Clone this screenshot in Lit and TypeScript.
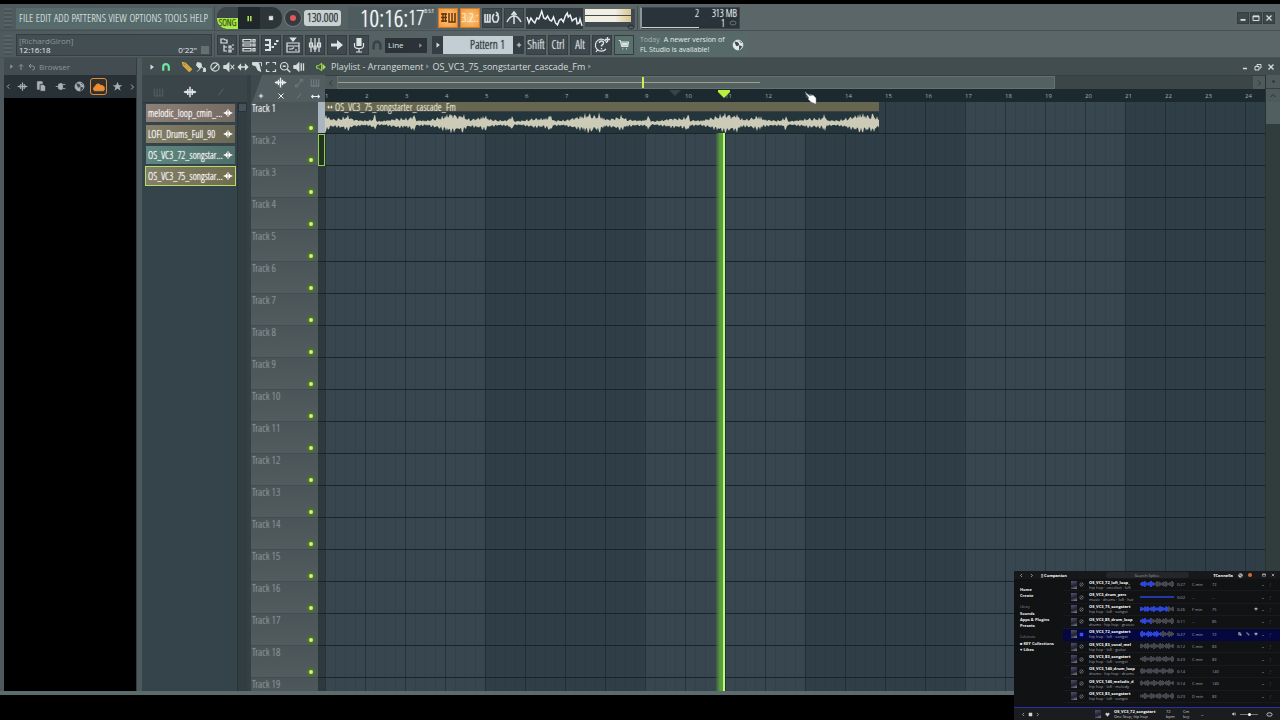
import { LitElement, html, svg, css } from "lit";
import { customElement, property, state } from "lit/decorators.js";
import { classMap } from "lit/directives/class-map.js";

const ICONS: Record<string, unknown> = {
  wave: svg`<path d="M1 8h14M3.5 6.5v3M5.5 4.5v7M8 2v12M10.5 4.5v7M12.5 6.5v3" stroke-width="1.7"/>`,
  tree: svg`<path d="M2 6V2h3l1 1h2v3zM5 8v6h3M5 10h3M10 9h2v2h-2zM10 13h2v2h-2zM13 8h2M13 12h2"/>`,
  rows: svg`<path d="M2 2.500h8v2.500H2zM2 7h8v2H2zM2 11.500h8V14H2zM12 2.500h2V5h-2zM12 7h2v2h-2zM12 11.500h2V14h-2z"/>`,
  roll: svg`<path d="M2 3h5v10H2M2 8h5M8.500 10h2.500M11 7h2.500M13 4h2.500" stroke-width="2"/>`,
  event: svg`<path d="M2 6h12v9H2zM2 9h12M4 12h3l2-1.500M10 13h2"/><path d="M5.500 1h5L8 4z" fill="currentColor"/>`,
  mixer: svg`<path d="M4 1v14M8 1v14M12 1v14"/><path d="M2.500 6h3v4h-3zM10.500 6h3v4h-3zM7 9h2v3H7z"/>`,
  arrow: svg`<path d="M2 6.500h6V3l6 5-6 5V9.500H2z" fill="currentColor" stroke="none"/>`,
  mic: svg`<path d="M6 1.500h4v7H6z" fill="currentColor"/><path d="M3.500 6v3q0 2.500 4.500 2.500T12.500 9V6M8 11.500V15M5 15h6"/>`,
  magnet: svg`<path d="M3.500 14V8a4.500 4.500 0 0 1 9 0v6" stroke-width="3.500"/>`,
  pencil: svg`<path d="M2 2l4 1 8 8-3 3-8-8zM5 5l7 7" fill="currentColor" fill-opacity=".45" stroke-width="1.500"/>`,
  brush: svg`<path d="M3 2l5 1 1 5-3 2-4-4zM9 8l5 5M7 10l-4 4M12 9l2 1v4h-3z" fill="currentColor"/>`,
  ban: svg`<circle cx="8" cy="8" r="5.500" stroke-width="1.600"/><path d="M12 4l-8 8" stroke-width="1.600"/>`,
  mute: svg`<path d="M1 6h3l4-4v12l-4-4H1z" fill="currentColor"/><path d="M10 5l5 6M15 5l-5 6" stroke-width="1.500"/>`,
  slip: svg`<path d="M0.500 8l5-5v4h5V3l5 5-5 5V9h-5v4z" fill="currentColor" stroke="none"/>`,
  slice: svg`<path d="M2 2h8l3 12-4-2-2-5-5-2z" fill="currentColor"/><path d="M11 2h3v5"/>`,
  select: svg`<path d="M2 5V2h4M10 2h4v3M14 11v3h-4M6 14H2v-3" stroke-width="1.600"/>`,
  zoom: svg`<circle cx="7" cy="7" r="5" stroke-width="1.600"/><path d="M5 7h4M11 11l4 4" stroke-width="2"/>`,
  play: svg`<path d="M1 6h3l4-4v12l-4-4H1z" fill="currentColor"/><path d="M11 3v10M14 3v10" stroke-width="1.800"/>`,
  speaker: svg`<path d="M1 6h3l5-4v12l-5-4H1z" stroke-width="1.500"/><path d="M11 4l4 4-4 4z" fill="currentColor"/>`,
  keys: svg`<path d="M2 2v11h12V2M6 2v11M10 2v11" stroke-width="1.800"/>`,
  slide: svg`<path d="M2 11h4v3H2zM6 11l5-6M10 2h4v3h-4z" stroke-width="1.500"/>`,
  cross: svg`<path d="M3 3l10 10M13 3L3 13" stroke-width="2"/>`,
  slash: svg`<path d="M4 13L12 3" stroke-width="2"/>`,
  wide: svg`<path d="M1 8h14M4 5L1 8l3 3M12 5l3 3-3 3" stroke-width="1.800"/>`,
  plus: svg`<path d="M8 2v12M2 8h12" stroke-width="2.800"/>`,
  files: svg`<path d="M2 1h7v11H2z" fill="currentColor"/><path d="M6 5h5l3 3v7H6z" fill="currentColor" stroke="#2a3338"/>`,
  plug: svg`<path d="M1 8h4M5 5q5-3 6 0v6q-1 3-6 0zM11 5h4M11 11h4" fill="currentColor"/>`,
  globe: svg`<circle cx="8" cy="8" r="6.500" fill="currentColor"/><path d="M4 4l4 1 1 3-3 1zM10 9l3 1-3 4zM10 3l3 2" fill="#3b474b" stroke="#3b474b"/>`,
  cloud: svg`<path d="M2 13a3 3 0 0 1 1-5.500A4 4 0 0 1 10.500 6 3.500 3.500 0 0 1 15 9.500 3 3 0 0 1 14 13z" fill="currentColor"/>`,
  star: svg`<path d="M8 1l2 5h5l-4 3.200 1.500 5L8 11l-4.500 3.200 1.500-5L1 6h5z" fill="currentColor" stroke="none"/>`,
  up: svg`<path d="M8 14V3M4 7l4-4 4 4" stroke-width="2"/>`,
  back: svg`<path d="M6 2L2 6l4 4M2 6h7q4 0 4 4t-4 4" stroke-width="2"/>`,
  right: svg`<path d="M4 1l9 7-9 7z" fill="currentColor" stroke="none"/>`,
  chevR: svg`<path d="M6 3l5 5-5 5" stroke-width="2"/>`,
  chevL: svg`<path d="M10 3L5 8l5 5" stroke-width="2"/>`,
  chevU: svg`<path d="M3 10l5-5 5 5" stroke-width="2"/>`,
  help: svg`<path d="M13 6a6 6 0 1 0-1 6M4 12l-2 3"/><path d="M5.500 6q0-2 2-2t2 2q0 1.500-2 2.500v1M7.500 11v1.200M13.500 0v5M11 2.500h5" stroke-width="1.400"/>`,
  cart: svg`<path d="M1 2h2l2 8h8l1-6H4" stroke-width="1.500"/><path d="M5 6h8M5 8h8M6 13h1M11 13h1" stroke-width="2"/>`,
  typing: svg`<path d="M1 4h6M1 7.500h6M1 11h6M3 3v9M5.500 3v9M9 3v9h6V3M12 3v9" stroke-width="1.500"/>`,
  blend: svg`<path d="M1 4v8h5V4M3.500 4v8M10 4q-3 4 0 8h3q3-4 0-8M12 2l2 2-2 2" stroke-width="1.600"/>`,
  metro: svg`<path d="M1 12q3-6 7-6t7 6M8 14V3M5.500 5L8 2l2.500 3" stroke-width="1.500"/>`,
  min: svg`<path d="M4 11h8" stroke-width="3"/>`,
  max: svg`<path d="M2 4h12v9H2z" stroke-width="2"/><path d="M2 5h12" stroke-width="3"/>`,
  restore: svg`<path d="M2 7h8v7H2zM6 6V3h8v7h-3" stroke-width="2"/>`,
  close: svg`<path d="M3 3l10 10M13 3L3 13" stroke-width="2.500"/>`,
  pause: svg`<path d="M5 2v12M11 2v12" stroke-width="3.500"/>`,
  stop: svg`<path d="M3 3h10v10H3z" fill="currentColor"/>`,
  heart: svg`<path d="M8 14L2 7q0-4 3-4 2 0 3 2 1-2 3-2 3 0 3 4z" fill="currentColor"/>`,
  knob: svg`<ellipse cx="8" cy="8" rx="6" ry="4" stroke-width="2"/>`,
};

const icon = (name: string, size = 12) => html`<svg
  class="icon" width=${size} height=${size} viewBox="0 0 16 16" aria-hidden="true"
  fill="none" stroke="currentColor" stroke-width="1.2">${ICONS[name]}</svg>`;

const shared = css`
  :host, * { box-sizing: border-box; }
  button {
    display: flex; align-items: center; justify-content: center;
    margin: 0; padding: 0; border: 0; background: none; color: inherit; font: inherit; flex: none;
  }
  .icon { display: block; flex: none; }
  .row { display: flex; align-items: center; }
  .grow { flex: 1; min-width: 0; }
  .slim { font-family: "Open Sans Condensed Light", "Open Sans Condensed", "Roboto Condensed", sans-serif; text-shadow: 0 0 1px currentColor; }
`;

/** Amplitude envelope of one phrase: [offset from its loudest beat, height]. */
const PHRASE = [[0, 10], [5, 9], [9, 7], [12, 10], [17, 5], [22, 4], [30, 6], [35, 8], [40, 4], [48, 3], [56, 3],
  [60, 5], [62, 9], [64, 2], [74, 3], [84, 5], [94, 5], [98, 6], [101, 10], [103, 3], [115, 3], [122, 5], [129, 7], [137, 10]];

function wavePath(width: number, mid: number): string {
  const top: string[] = [];
  const bottom: string[] = [];
  for (let x = 0; x <= width; x++) {
    const p = (x + 12) % 137;
    const i = Math.max(1, PHRASE.findIndex(([o]) => o >= p));
    const [x0, a0] = PHRASE[i - 1];
    const [x1, a1] = PHRASE[i];
    const amp = a0 + ((a1 - a0) * (p - x0)) / (x1 - x0);
    const up = Math.abs(Math.sin(x * 1.3) * Math.cos(x * 0.7));
    const down = Math.abs(Math.sin(x * 1.1 + 1) * Math.cos(x * 0.8));
    top.push(`${x} ${(mid - amp * (0.48 + 0.65 * up)).toFixed(1)}`);
    bottom.unshift(`${x} ${(mid + amp * (0.48 + 0.65 * down)).toFixed(1)}`);
  }
  return `M${top.join("L")}L${bottom.join("L")}Z`;
}

@customElement("transport-bar")
class TransportBar extends LitElement {
  static styles = [shared, css`
    :host { display: block; color: #d5dcdd; font: 10px/12px "Open Sans", sans-serif;
      background: linear-gradient(90deg, #4f5a5e, #5b6668 50%); }
    .bar { height: 27px; border-bottom: 1px solid #465154; padding: 2px 5px 0 0; white-space: nowrap; }
    .bar > * { flex: none; }
    .bar > .grow { flex: 1; }
    .grip { width: 8px; height: 20px; margin: 0 4px;
      background: repeating-linear-gradient(#586366 0 2px, #485357 2px 4px); }
    .menu { width: 196px; height: 21px; padding: 0 4px 0 3px; background: #576b6d; justify-content: space-between;
      color: #f0f8f6; font-size: 11px; line-height: 20px; }
    .hint { width: 196px; height: 22px; padding: 1px 2px; background: #434e53; border: 1px solid #343e42;
      font-size: 8px; line-height: 9px; }
    .hint .user { color: #8b9596; }
    .hint .line { display: flex; justify-content: space-between; color: #e3e8e8; }
    .hint .jack { width: 8px; height: 8px; background: #657073; margin-left: 4px; }
    .gap { width: 7px; }
    .thin { width: 2px; }
    .rule { width: 1px; height: 24px; background: #434d51; margin: 0 2px; }
    .deck { height: 22px; border-radius: 10px; background: #2d3539; overflow: hidden; }
    .song { width: 21px; height: 22px; flex-direction: column; justify-content: flex-end; background: #3b4447; }
    .song span { width: 21px; height: 11px; background: #a9ea4a; color: #24330d; font-size: 9px; line-height: 10px; }
    .pause { width: 22px; height: 22px; background: #20272a; color: #aee652; }
    .halt { width: 22px; height: 22px; color: #e1e6e6; }
    .rec { width: 18px; height: 18px; margin: 0 2px; border-radius: 9px; background: #343b3f; border: 1px solid #757d80; }
    .rec i { width: 6px; height: 6px; border-radius: 3px; background: #e8545a; }
    .tempo { width: 37px; height: 16px; border: 0; border-radius: 3px; background: #c9d1d3; color: #1c2528; padding: 0 3px;
      font-size: 12px; line-height: 16px; }
    .clock { width: 88px; height: 22px; background: #4e5c5f; padding-left: 12px; color: #f4f8f8; font-size: 24px; line-height: 22px; }
    .clock span { font-size: 20px; }
    .clock small { font-size: 6px; align-self: flex-start; line-height: 8px; }
    .opt { width: 20px; height: 20px; margin-right: 2px; background: #3f494d; border: 1px solid #343d41; color: #dde3e3; }
    .opt.on { background: radial-gradient(#ffca80, #f0973c); border-color: #d0792a; color: #6b3206; }
    .opt.cue { color: #fff3de; font-size: 12px; }
    .scope { width: 57px; height: 21px; background: #313b40; margin-right: 2px; }
    .meter { width: 50px; height: 18px; display: flex; flex-direction: column; gap: 1px; background: #3e4a4f; }
    .meter i { height: 6px; background: linear-gradient(90deg, #f2eee2 0 60%, #dcc48e 92%, #3e4a4f 92%); }
    .meter span { height: 4px; display: flex; justify-content: flex-end; color: #252e32; }
    .cpu { width: 100px; height: 22px; background: #293339; border: 1px solid #3c474b; border-left: 2px solid #8b9596;
      padding: 0 2px 0 0; font-size: 10px; line-height: 10px; display: grid; grid-template-columns: 57px 1fr; text-align: right; color: #eaf0f0; }
    .cpu .load { border-bottom: 1px solid #ccd3d4; }
    .cpu .load.off { border-bottom: 1px solid #ccd3d4; }
    .cpu .load:first-child { border-bottom: 0; }
    .cpu .one { display: flex; justify-content: flex-end; align-items: center; gap: 4px; }
    .cpu .icon { color: #6b7578; }
    .win { width: 12px; height: 12px; margin-left: 1px; background: #3e484b; border: 1px solid #343d40; }
    .combo { width: 42px; height: 15px; margin: 0 5px 0 2px; padding-right: 4px; background: #2b3338; color: #8d9799; }
    .combo select { flex: 1; min-width: 0; height: 15px; padding: 0 3px; border: 0; background: none; color: #dde3e3;
      appearance: none; font: 8px/14px "Open Sans", sans-serif; }
    .side { width: 11px; height: 18px; background: #353e42; }
    .pattern { width: 70px; height: 18px; background: #c3ced4; color: #242e33; justify-content: flex-end; padding-right: 8px;
      font-size: 12px; line-height: 18px; }
    .mod { font-size: 12px; line-height: 16px; }
    .shop { background: #58716c; }
    .news { width: 110px; height: 22px; margin-left: 1px; padding: 0 3px; background: #566b69; color: #e3ece9;
      font-size: 7px; line-height: 10px; justify-content: space-between; }
    .news span { color: #a3b0ae; margin-right: 4px; }
    .dim { color: #394347; }
  `];

  render() {
    return html`
      <div class="bar row">
        <div class="grip"></div>
        <nav class="menu row slim">${["FILE", "EDIT", "ADD", "PATTERNS", "VIEW", "OPTIONS", "TOOLS", "HELP"].map((m) => html`<button>${m}</button>`)}</nav>
        <div class="rule"></div>
        <div class="deck row">
          <button class="song" aria-label="Song mode"><span class="slim">SONG</span></button>
          <button class="pause" aria-label="Pause">${icon("pause", 7)}</button>
          <button class="halt" aria-label="Stop">${icon("stop", 6)}</button>
        </div>
        <button class="rec" aria-label="Record"><i></i></button>
        <input class="tempo slim" aria-label="Tempo" value="130.000" />
        <div class="gap"></div>
        <div class="clock row slim">10:16:<span>17</span><small>B:S:T</small></div>
        <div class="thin"></div>
        <button class="opt on" aria-label="Typing keyboard">${icon("typing", 16)}</button>
        <button class="opt on cue slim" aria-label="Countdown">3.2.:</button>
        <button class="opt" aria-label="Blend recording">${icon("blend", 16)}</button>
        <button class="opt" aria-label="Metronome">${icon("metro", 16)}</button>
        <svg class="scope" viewBox="0 0 58 21" fill="none" stroke="#eef3f3" stroke-width="1.5">
          <path d="M1 9l2 6 2-5 2 3 2 2 2-5 2 1 2-5 1-3 2 7 2 1 2-3 2 4 2 1 2-4 2 6 2 2 2-5 2-1 2 3 2-6 2-3 1 4 2-2 2 6 2-2 2-1 1 6 2-1 1-4 2 7" />
        </svg>
        <div class="meter"><i></i><i></i><span>${icon("knob", 8)}</span></div>
        <div class="rule"></div>
        <div class="cpu slim"><span class="load">2</span><span>313 MB</span><span class="load"></span><span class="one">1 ${icon("knob", 8)}</span></div>
        <div class="grow"></div>
        <button class="win" aria-label="Minimize">${icon("min", 10)}</button>
        <button class="win" aria-label="Maximize">${icon("max", 8)}</button>
        <button class="win" aria-label="Close">${icon("close", 8)}</button>
      </div>
      <div class="bar row">
        <div class="grip"></div>
        <div class="hint">
          <div class="user">[RichardGiron]</div>
          <div class="line"><span>12:16:18</span><span class="row">0'22"<i class="jack"></i></span></div>
        </div>
        <div class="rule"></div>
        ${["tree", "rows", "roll", "event", "mixer", "arrow", "mic"].map((n) => html`<button class="opt" aria-label=${n}>${icon(n, 16)}</button>`)}
        <span class="dim">${icon("magnet", 12)}</span>
        <div class="combo row"><select aria-label="Snap"><option>Line</option></select>${icon("right", 5)}</div>
        <button class="side" aria-label="Pattern list">${icon("right", 6)}</button>
        <button class="pattern slim">Pattern 1</button>
        <button class="side" aria-label="New pattern">${icon("plus", 6)}</button>
        <div class="thin"></div>
        ${["Shift", "Ctrl", "Alt"].map((k) => html`<button class="opt mod slim">${k}</button>`)}
        <button class="opt" aria-label="Help">${icon("help", 16)}</button>
        <button class="opt shop" aria-label="Shop">${icon("cart", 12)}</button>
        <div class="news row"><div><span>Today</span>A newer version of<br />FL Studio is available!</div>${icon("globe", 12)}</div>
      </div>
    `;
  }
}

@customElement("file-browser")
class FileBrowser extends LitElement {
  static styles = [shared, css`
    :host { display: flex; flex-direction: column; background: #000; color: #a8b0b1; border-right: 1px solid #333c40; }
    .head { height: 17px; padding-left: 5px; gap: 3px; background: #434d51; color: #8b9496; font: 8px/16px "Open Sans", sans-serif; }
    .tabs { height: 23px; padding: 0 1px; justify-content: space-between; background: #283136; }
    .tabs button { width: 17px; height: 17px; }
    .tabs .edge { width: 7px; }
    .tabs .on { color: #ee8d33; border: 1px solid #d98d45; border-radius: 3px; background: #33302c; }
  `];

  render() {
    return html`
      <div class="head row">${icon("right", 5)}${icon("up", 8)}${icon("back", 8)}<span>Browser</span></div>
      <div class="tabs row">
        <button class="edge" aria-label="Previous">${icon("chevL", 7)}</button>
        ${["wave", "files", "plug", "globe", "cloud", "star"].map((n) => html`<button class=${classMap({ on: n === "cloud" })} aria-label=${n}>${icon(n, n === "cloud" ? 12 : 11)}</button>`)}
        <button class="edge" aria-label="Next">${icon("chevR", 8)}</button>
      </div>
    `;
  }
}

@customElement("play-list")
class PlayList extends LitElement {
  @state() private selected = 3;

  static styles = [shared, css`
    :host { display: flex; flex-direction: column; min-width: 0; min-height: 0; color: #d5dcdd; font: 9px/16px "Open Sans", sans-serif; }
    .title { height: 17px; flex: none; background: #424d50; padding: 0 5px 0 7px; }
    .tools { width: 167px; gap: 2px; }
    .tools .magnet { color: #6ee3a0; margin: 0 8px 0 4px; }
    .tools .pencil { color: #e2b23f; }
    .lime { color: #a9e64b; }
    .crumbs { gap: 2px; margin-left: 5px; white-space: nowrap; }
    .crumbs i { color: #818b8d; }
    .wins { gap: 5px; }
    .body { flex: 1; min-height: 0; display: grid; grid-template-columns: 109px 1fr; background: #3e494d; }
    .picker { display: flex; flex-direction: column; min-height: 0; background: #3a454a; border-right: 4px solid #354044; }
    .kinds { height: 27px; padding: 7px 10px 0 11px; gap: 19px; color: #505a5e; flex: none; }
    .kinds .on { color: #e9eeee; }
    .lists { flex: 1; display: grid; grid-template-columns: 95px 1fr; background: #35434b; border-top: 1px solid #2c363a; }
    .clips { display: flex; flex-direction: column; gap: 3px; padding: 1px 2px 0 4px; }
    .clips button { width: 100%; height: 18px; padding: 0 2px; justify-content: space-between; color: #fff; font-size: 10px; line-height: 18px; }
    .c0 { background: linear-gradient(100deg, #8c8078, #746a62); }
    .c1 { background: linear-gradient(100deg, #837f69, #6b6853); }
    .c2 { background: linear-gradient(100deg, #5f8880, #4f6f69); }
    .c3 { background: linear-gradient(100deg, #837f69, #6f6c4e); }
    .clips .sel { outline: 1px solid #b6dd68; }
    .vbar { background: #323d42; border-left: 1px solid #29333a; }
    .vbar i { display: block; width: 9px; height: 9px; background: #465256; border: 1px solid #29333a; }
    .stage { position: relative; display: grid; grid-template-columns: 74px 1fr 15px; grid-template-rows: 27px 1fr; min-width: 0; min-height: 0; }
    .corner { display: grid; grid-template-columns: 20px 19px 17px 16px; justify-items: center; align-items: center;
      color: #e9eeee; background: linear-gradient(110deg, #3e494d 0 10px, #525d60 11px); }
    .corner .off { color: #737d80; }
    .top { display: flex; flex-direction: column; min-width: 0; }
    .nav { height: 14px; display: grid; grid-template-columns: 12px 1fr 198px 12px; background: #3c4547; border-top: 1px solid #36403f; }
    .cap { width: 100%; background: #4e5a5c; color: #2b3437; }
    .thumb { background: #546163; border: 1px solid #64716f; position: relative; }
    .extent { position: absolute; left: 0; top: 5px; width: 59%; height: 1px; background: #a5a088; }
    .tick { position: absolute; left: 42.500%; top: 0; width: 2px; height: 11px; background: #c6f24d; }
    .ruler { height: 13px; display: flex; overflow: hidden; background: #1c2a30; color: #a5b0b3; font: 6px/14px "Open Sans", sans-serif; }
    .ruler span { flex: 0 0 40px; }
    .heads { overflow: hidden; min-height: 0; background: #3a4548; display: grid; grid-template-columns: 67px 1fr; align-content: start; }
    .head { height: 32px; display: flex; justify-content: space-between; padding: 0 3px 0 1px; color: #899294; border-bottom: 1px solid #414d50;
      background: linear-gradient(#4a5558, #525c5e); font-size: 11px; line-height: 12px; }
    .head.live { color: #f0f5f5; }
    .led { align-self: flex-end; width: 8px; height: 8px; border-radius: 4px; background: #c9f584; border: 2px solid #4f7328; margin-bottom: 1px; }
    .strip { height: 32px; background: #2e393e; border-bottom: 1px solid #17232a; }
    .strip.full { background: #a9b6c2; }
    .strip.armed { background: #22331f; outline: 1px solid #8fce52; outline-offset: -1px; }
    .grid { position: relative; min-width: 0; min-height: 0; background:
      repeating-linear-gradient(transparent 0 31px, #18252d 31px 32px),
      repeating-linear-gradient(90deg, #00000038 0 1px, transparent 1px 40px),
      repeating-linear-gradient(90deg, #00000012 0 1px, transparent 1px 10px),
      repeating-linear-gradient(90deg, #37464f 0 160px, #2f3e47 160px 320px); }
    .clip { width: 554px; height: 31px; background: #25353c; }
    .clip .name { height: 10px; gap: 2px; padding-left: 2px; background: #676651; color: #e6e5d4;
      font-size: 10px; line-height: 10px; border-bottom: 1px solid #3c4140; }
    .clip .wave { display: block; }
    .playhead { position: absolute; left: 464px; top: 58px; bottom: 0; width: 10px; z-index: 1;
      background: linear-gradient(90deg, transparent, #589b39 50%, #5fa23a 80%, #b9fb7f 80%); }
    .marker { position: absolute; left: 467px; top: 15px; z-index: 2; }
    .ghost { position: absolute; left: 418px; top: 15px; z-index: 2; }
    .cursor { position: absolute; left: 553px; top: 16px; z-index: 2; }
    .scroll { background: #313c3d; border-left: 1px solid #28322f; display: flex; flex-direction: column; }
    .scroll .knob { height: 22px; background: #525f61; }
    .caps { display: flex; flex-direction: column; border-left: 1px solid #28322f; }
    .caps .cap { height: 14px; border-bottom: 1px solid #343e40; }
  `];

  render() {
    const clips = ["melodic_loop_cmin_...", "LOFI_Drums_Full_90", "OS_VC3_72_songstar...", "OS_VC3_75_songstar..."];
    return html`
      <div class="title row">
        <div class="tools row">
          ${icon("right", 6)}<span class="magnet">${icon("magnet", 10)}</span>
          <span class="pencil">${icon("pencil", 12)}</span>
          ${["brush", "ban", "mute", "slip", "slice", "select", "zoom", "play"].map((n) => icon(n, 12))}
        </div>
        <span class="lime">${icon("speaker", 10)}</span>
        <div class="crumbs row"><span>Playlist - Arrangement</span><i>${icon("right", 5)}</i><span>OS_VC3_75_songstarter_cascade_Fm</span><i>${icon("right", 5)}</i></div>
        <div class="grow"></div>
        <div class="wins row">
          <button aria-label="Minimize playlist">${icon("min", 8)}</button>
          <button aria-label="Restore playlist">${icon("restore", 8)}</button>
          <button aria-label="Close playlist">${icon("close", 8)}</button>
        </div>
      </div>
      <div class="body">
        <div class="picker">
          <div class="kinds row">${icon("keys", 11)}<span class="on">${icon("wave", 14)}</span>${icon("slash", 10)}</div>
          <div class="lists">
            <div class="clips">${clips.map((c, i) => html`
              <button class=${classMap({ slim: true, ["c" + i]: true, sel: i === this.selected })} @click=${() => (this.selected = i)}>
                <span>${c}</span>${icon("wave", 10)}</button>`)}</div>
            <div class="vbar"><i></i></div>
          </div>
        </div>
        <div class="stage">
          <div class="corner">
            <i></i>${icon("wave", 13)}<i class="off">${icon("slide", 10)}</i><i class="off">${icon("keys", 10)}</i>
            ${icon("plus", 6)}${icon("cross", 8)}<i class="off">${icon("slash", 8)}</i>${icon("wide", 9)}
          </div>
          <div class="top">
            <div class="nav">
              <button class="cap" aria-label="Scroll left">${icon("chevL", 8)}</button>
              <div class="thumb"><div class="extent"></div><div class="tick"></div></div>
              <i></i>
              <button class="cap" aria-label="Scroll right">${icon("chevR", 8)}</button>
            </div>
            <div class="ruler">${Array.from({ length: 24 }, (_, i) => html`<span>${i + 1}</span>`)}</div>
          </div>
          <div class="caps"><button class="cap" aria-label="Zoom">${icon("stop", 3)}</button><button class="cap" aria-label="Scroll up">${icon("chevU", 8)}</button></div>
          <div class="heads">${Array.from({ length: 19 }, (_, i) => html`
            <div class=${classMap({ head: true, slim: true, live: i === 0 })}>Track ${i + 1}<i class="led"></i></div>
            <div class=${classMap({ strip: true, full: i === 0, armed: i === 1 })}></div>`)}</div>
          <div class="grid">
            <div class="clip">
              <div class="name row slim">${icon("slip", 6)}OS_VC3_75_songstarter_cascade_Fm</div>
              <svg class="wave" width="554" height="21" viewBox="0 0 554 21"><path d=${wavePath(554, 11)} fill="#cccbb8" /></svg>
            </div>
          </div>
          <div class="scroll"><div class="knob"></div></div>
          <div class="playhead"></div>
          <svg class="ghost" width="12" height="7" viewBox="0 0 12 7"><path d="M0 0h12L6 6z" fill="#36444a" /></svg>
          <svg class="marker" width="12" height="8" viewBox="0 0 12 8"><path d="M0 0h12v2L6 8 0 2z" fill="#b9f23c" /></svg>
          <svg class="cursor" width="14" height="14" viewBox="0 0 14 14"><path d="M1 1l5 4 3-1 3 3 0 6-5-2-3-3 1-1z" fill="#fff" stroke="#8b9296" stroke-width=".5" /></svg>
        </div>
      </div>
    `;
  }
}

interface Sample { name: string; tags: string; time: string; key: string; bpm: string; hot: number; flat?: boolean; }

@customElement("sample-window")
class SampleWindow extends LitElement {
  @property({ attribute: false }) samples: Sample[] = [
    { name: "OS_VC3_72_lofi_loop_", tags: "hip hop · oneshot · lofi", time: "0:27", key: "C min", bpm: "72", hot: 0.4 },
    { name: "OS_VC3_drum_perc", tags: "music · drums · lofi · hat", time: "0:02", key: "--", bpm: "--", hot: 1, flat: true },
    { name: "OS_VC3_75_songstart", tags: "hip hop · lofi · songst", time: "0:26", key: "F min", bpm: "75", hot: 0.8 },
    { name: "OS_VC3_85_drum_loop", tags: "drums · hip hop · groove", time: "0:11", key: "--", bpm: "85", hot: 0.3 },
    { name: "OS_VC3_72_songstart", tags: "hip hop · lofi · songst", time: "0:27", key: "C min", bpm: "72", hot: 0.6 },
    { name: "OS_VC3_83_vocal_mel", tags: "hip hop · lofi · guitar", time: "0:12", key: "C min", bpm: "83", hot: 0 },
    { name: "OS_VC3_83_songstart", tags: "hip hop · lofi · songst", time: "0:23", key: "C min", bpm: "83", hot: 0 },
    { name: "OS_VC3_140_drum_loop", tags: "drums · hip hop · drums", time: "0:14", key: "", bpm: "140", hot: 0 },
    { name: "OS_VC3_140_melodic_d", tags: "hip hop · lofi · melody", time: "0:14", key: "C min", bpm: "140", hot: 0 },
    { name: "OS_VC3_83_songstart", tags: "hip hop · lofi · songst", time: "0:23", key: "D min", bpm: "83", hot: 0 },
  ];

  static styles = [shared, css`
    :host { display: flex; flex-direction: column; background: #111214; color: #d4d4d6; font: 4px/5px "Open Sans", sans-serif; overflow: hidden; }
    .top { height: 8px; flex: none; padding: 0 5px; gap: 5px; background: #17181a; display: grid; grid-template-columns: 1fr 83px 1fr; align-items: center; }
    .group { display: flex; align-items: center; gap: 5px; }
    .end { justify-content: flex-end; }
    .search { width: 83px; height: 6px; border-radius: 3px; border: 0; padding: 0; background: #25262a; text-align: center; font: inherit; }
    .search::placeholder { color: #a2a3a6; }
    b { font-weight: 700; color: #fff; }
    .face { width: 4px; height: 4px; border-radius: 2px; background: #c8703f; }
    .main { flex: 1; min-height: 0; display: grid; grid-template-columns: 49px 1fr; overflow: hidden; }
    .side { padding: 8px 0 0 6px; display: flex; flex-direction: column; gap: 1px; font-weight: 700; color: #eee; white-space: nowrap; }
    .side small { font-size: 3px; font-weight: 400; color: #8f9094; margin-top: 6px; }
    table { width: 100%; height: 124px; border-collapse: collapse; table-layout: fixed; }
    td { padding: 0; border-bottom: 1px solid #191a1d; white-space: nowrap; color: #a5a6aa; }
    .now td { background: #05083f; border-color: #05083f; }
    td b, td span { display: block; line-height: 5px; }
    td .acts { display: flex; justify-content: flex-end; gap: 4px; padding-right: 8px; }
    .pick { color: #3550ff; }
    .art { width: 6px; height: 8px; background: linear-gradient(160deg, #53517a, #20202b 60%, #8a88a0); margin: 0 auto; }
    .foot { height: 13px; flex: none; border-top: 1px solid #2a2fa8; background: #1b1c1f; padding: 0 7px; gap: 4px; }
    .foot .deck { width: 70px; gap: 2px; }
    .foot .art { margin: 0; }
    .foot .song { width: 48px; white-space: nowrap; }
    .foot .stat { width: 13px; }
    .slider { width: 18px; height: 3px; margin: 0; appearance: none; background: linear-gradient(#777, #777) center / 100% 1px no-repeat; }
    .slider::-webkit-slider-thumb { appearance: none; width: 3px; height: 3px; border-radius: 2px; background: #fff; }
  `];

  private bars(s: Sample, row: number) {
    return html`<svg width="34" height="8" viewBox="0 0 34 8">${Array.from({ length: 34 }, (_, x) => {
      const h = s.flat ? 1.5 : 2 + 4 * Math.abs(Math.sin(x * 0.45 + row)) * (x % 3 === 0 ? 0.5 : 1);
      return svg`<path d=${`M${x} ${4 - h / 2}h1v${h}h-1z`} fill=${x / 34 < s.hot ? "#2d46d8" : "#46474e"} />`;
    })}</svg>`;
  }

  render() {
    return html`
      <div class="top">
        <div class="group">${icon("chevL", 5)}${icon("chevR", 5)}<b>&nbsp; ▯ Companion</b></div>
        <input class="search" aria-label="Search" placeholder="Search Splice" />
        <div class="group end"><b>TCannella</b>${icon("globe", 5)}<i class="face"></i><i></i>${icon("max", 4)}${icon("close", 4)}</div>
      </div>
      <div class="main">
        <div class="side"><span>Home</span><span>Create</span><small>Library</small><span>Sounds</span><span>Apps &amp; Plugins</span><span>Presets</span>
          <small>Collections</small><span>■ KEY Collections</span><span>♥ Likes</span></div>
        <table>
          <colgroup><col style="width:6px" /><col style="width:10px" /><col style="width:10px" /><col style="width:51px" /><col style="width:37px" /><col style="width:15px" /><col style="width:20px" /><col style="width:20px" /><col /></colgroup>
          ${this.samples.map((s, i) => html`<tr class=${classMap({ now: i === 4 })}>
            <td></td><td><div class="art"></div></td><td class=${classMap({ pick: i === 4 })}>${icon(i === 4 ? "stop" : "ban", 5)}</td>
            <td><b>${s.name}</b><span>${s.tags}</span></td>
            <td>${this.bars(s, i)}</td><td>${s.time}</td><td>${s.key}</td><td>${s.bpm}</td>
            <td><div class="acts">${i === 4 ? html`${icon("files", 4)}${icon("pencil", 4)}${icon("heart", 4)}` : i === 2 ? icon("heart", 4) : ""}<i>–</i><i>⋮</i></div></td></tr>`)}
        </table>
      </div>
      <div class="foot row"><div class="deck row">${icon("chevL", 5)}${icon("stop", 5)}${icon("chevR", 5)}</div>
        <i class="art"></i>${icon("heart", 5)}<div class="song"><b>OS_VC3_72_songstart</b><br />One Stop, hip hop</div>
        <span class="stat">72<br />bpm</span><span class="stat">Cm<br />key</span><span>→</span><div class="grow"></div>
        ${icon("play", 4)}<input class="slider" type="range" aria-label="Volume" value="50" /><i></i>${icon("knob", 7)}</div>
    `;
  }
}

@customElement("app-root")
class AppRoot extends LitElement {
  static styles = [shared, css`
    :host { display: block; height: 100vh; background: #000; padding: 4px 0 25px; position: relative; overflow: hidden; }
    .frame { height: 100%; display: flex; flex-direction: column; background: #566265; border-bottom: 4px solid #5c6b6c; }
    .work { flex: 1; min-height: 0; display: grid; grid-template-columns: 133px 1fr; column-gap: 5px; padding-left: 4px; background: #4d595c; }
    .overlay { position: absolute; right: 0; bottom: 0; width: 266px; height: 149px; z-index: 5; }
  `];

  render() {
    return html`
      <div class="frame">
        <transport-bar></transport-bar>
        <div class="work"><file-browser></file-browser><play-list></play-list></div>
      </div>
      <sample-window class="overlay"></sample-window>
    `;
  }
}
